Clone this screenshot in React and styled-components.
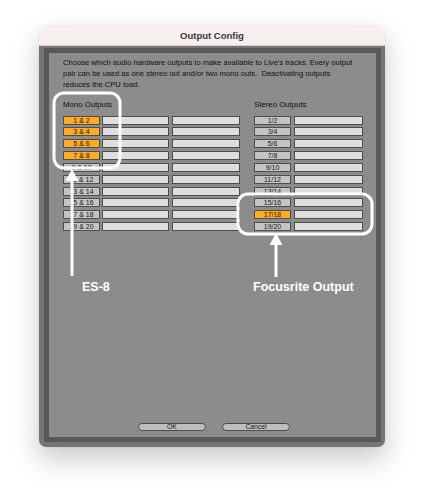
import React from "react";
import styled, { createGlobalStyle } from "styled-components";

const GlobalStyle = createGlobalStyle`
  html, body {
    margin: 0;
    padding: 0;
    background: #ffffff;
  }
  body {
    font-family: "Liberation Sans", Arial, sans-serif;
  }
`;

const monoRows = [
  ["1 & 2", true],
  ["3 & 4", true],
  ["5 & 6", true],
  ["7 & 8", true],
  ["9 & 10", false],
  ["11 & 12", false],
  ["13 & 14", false],
  ["15 & 16", false],
  ["17 & 18", false],
  ["19 & 20", false],
];

const stereoRows = [
  ["1/2", false],
  ["3/4", false],
  ["5/6", false],
  ["7/8", false],
  ["9/10", false],
  ["11/12", false],
  ["13/14", false],
  ["15/16", false],
  ["17/18", true],
  ["19/20", false],
];

const App = () => {
  return (
    <Page>
      <GlobalStyle />
      <Window>
        <TitleBar>Output Config</TitleBar>
        <Frame>
          <Panel>
            <Intro>
              Choose which audio hardware outputs to make available to Live's tracks. Every output
              <br />
              pair can be used as one stereo out and/or two mono outs.&nbsp; Deactivating outputs
              <br />
              reduces the CPU load.
            </Intro>
            <Columns>
              <Group>
                <GroupTitle>Mono Outputs</GroupTitle>
                <Rows>
                  {monoRows.map(([label, on]) => (
                    <Row key={label}>
                      <Toggle $on={on}>{label}</Toggle>
                      <Field $w={67} />
                      <Field $w={68} $ml={1} />
                    </Row>
                  ))}
                </Rows>
              </Group>
              <Group>
                <GroupTitle>Stereo Outputs</GroupTitle>
                <Rows>
                  {stereoRows.map(([label, on]) => (
                    <Row key={label}>
                      <Toggle $on={on}>{label}</Toggle>
                      <Field $w={69} $ml={1} />
                    </Row>
                  ))}
                </Rows>
              </Group>
            </Columns>
            <Buttons>
              <PillButton>OK</PillButton>
              <PillButton>Cancel</PillButton>
            </Buttons>
          </Panel>
        </Frame>
      </Window>

      <Overlay width="424" height="500" viewBox="0 0 424 500">
        <g fill="none" stroke="#ffffff" strokeWidth="3">
          <rect x="54" y="93" width="66" height="75" rx="10" />
          <rect x="238" y="194" width="134" height="40" rx="10" />
          <line x1="72" y1="178" x2="72" y2="276" />
          <line x1="276" y1="242" x2="276" y2="277" />
        </g>
        <g fill="#ffffff">
          <polygon points="72,169 65.5,181 78.5,181" />
          <polygon points="276,233 269.5,245 282.5,245" />
        </g>
      </Overlay>
      <Callout $x={82} $y={279}>ES-8</Callout>
      <Callout $x={253} $y={279}>Focusrite Output</Callout>
    </Page>
  );
};

export default App;

const Page = styled.div`
  position: relative;
  width: 424px;
  height: 500px;
  padding-top: 26px;
  box-sizing: border-box;
`;

const Window = styled.div`
  margin-left: 39px;
  width: 346px;
  border-radius: 8px 8px 7px 7px;
  overflow: hidden;
  box-shadow: 0 12px 28px rgba(0, 0, 0, 0.22), 0 0 2px rgba(0, 0, 0, 0.12);
`;

const TitleBar = styled.div`
  height: 20px;
  background: #f7eeee;
  border-bottom: 1px solid #d8d0d0;
  box-sizing: border-box;
  display: flex;
  align-items: center;
  justify-content: center;
  font-size: 9.5px;
  font-weight: bold;
  color: #3a3a3a;
`;

const Frame = styled.div`
  background: #757575;
  padding: 2px 4px 5px 5px;
`;

const Panel = styled.div`
  height: 394px;
  box-sizing: border-box;
  border: 5px solid #585858;
  background: #8c8c8c;
  display: flex;
  flex-direction: column;
  padding: 4px 13px 6px 14px;
`;

const Intro = styled.p`
  margin: 0;
  font-size: 7.6px;
  line-height: 11px;
  color: #111111;
  white-space: nowrap;
`;

const Columns = styled.div`
  display: flex;
  gap: 14px;
  margin-top: 10px;
`;

const Group = styled.div`
  display: flex;
  flex-direction: column;
`;

const GroupTitle = styled.div`
  font-size: 7.8px;
  line-height: 10px;
  color: #111111;
  margin-bottom: 5.5px;
`;

const Rows = styled.div`
  display: flex;
  flex-direction: column;
  gap: 2.85px;
`;

const Row = styled.div`
  display: flex;
  gap: 2px;
`;

const Toggle = styled.div`
  width: 37px;
  height: 9px;
  box-sizing: border-box;
  border: 1px solid #4e4e4e;
  background: ${(p) => (p.$on ? "#ffab24" : "#c4c4c4")};
  font-size: 7px;
  line-height: 7px;
  text-align: center;
  color: #141414;
`;

const Field = styled.div`
  width: ${(p) => p.$w}px;
  margin-left: ${(p) => p.$ml || 0}px;
  height: 9px;
  box-sizing: border-box;
  border: 1px solid #4e4e4e;
  background: #dedede;
`;

const Buttons = styled.div`
  margin-top: auto;
  display: flex;
  justify-content: center;
  gap: 16px;
  padding-left: 2px;
`;

const PillButton = styled.div`
  width: 68px;
  height: 8px;
  box-sizing: border-box;
  border: 1px solid #4e4e4e;
  border-radius: 5px;
  background: #bebebe;
  font-size: 6.8px;
  line-height: 6px;
  text-align: center;
  color: #141414;
`;

const Overlay = styled.svg`
  position: absolute;
  left: 0;
  top: 0;
  pointer-events: none;
`;

const Callout = styled.div`
  position: absolute;
  left: ${(p) => p.$x}px;
  top: ${(p) => p.$y}px;
  font-size: 12.5px;
  font-weight: bold;
  color: #ffffff;
  line-height: 16px;
  white-space: nowrap;
`;
